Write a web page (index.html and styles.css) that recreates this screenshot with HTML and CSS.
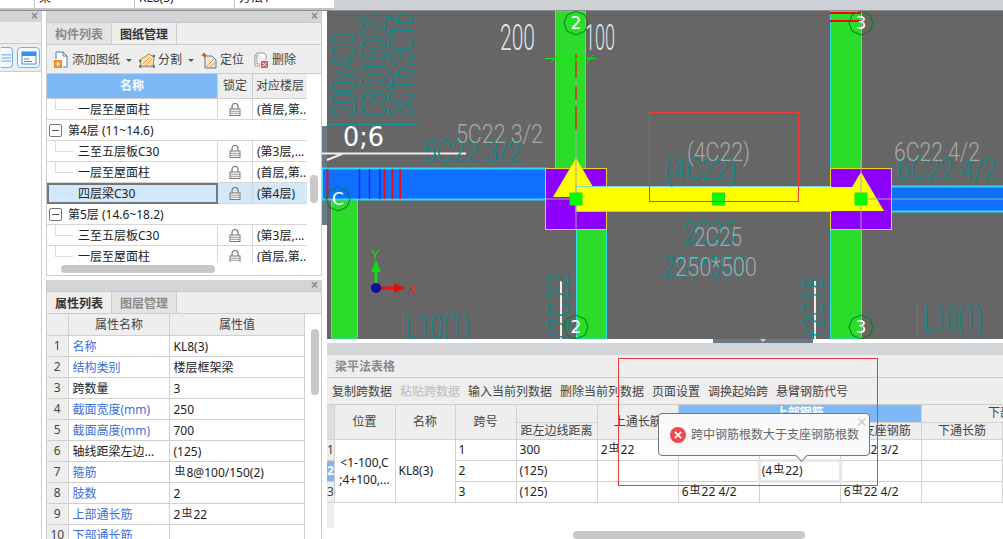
FILE: index.html
```html
<!DOCTYPE html>
<html lang="zh">
<head>
<meta charset="utf-8">
<title>梁平法表格</title>
<link rel="stylesheet" href="styles.css">
</head>
<body>
<svg class="defs" width="0" height="0" aria-hidden="true">
  <symbol id="lock" viewBox="0 0 12 13">
    <path d="M3 6V3.500a3 3 0 0 1 6 0V6" fill="none" stroke="#777" stroke-width="1.200"/>
    <rect x="1" y="6" width="10" height="6.500" fill="#fff" stroke="#777"/>
    <path d="M1 8.300h10M1 10.300h10" stroke="#999"/>
  </symbol>
</svg>
<div class="topstrip">
  <div class="topcells">
    <span class="topcell">梁</span><span class="topcell">KL8(3)</span><span class="topcell">方法1</span>
  </div>
</div>
<div class="main">
  <aside class="stub">
    <div class="titleband"><span class="closex">×</span></div>
    <div class="stubbar"></div>
    <div class="stubtools">
      <span class="iconbtn iconbtn-cut"><svg width="14" height="14" viewBox="0 0 14 14"><path d="M1 3h12M1 7h12M1 11h12" stroke="#3b8fe8"/></svg></span>
      <span class="iconbtn"><svg width="16" height="14" viewBox="0 0 16 14"><rect x="1" y="1" width="14" height="12" fill="#fff" stroke="#3b8fe8"/><rect x="1" y="1" width="14" height="4" fill="#3b8fe8"/><path d="M3 8h5M3 10.500h8" stroke="#3b8fe8"/></svg></span>
    </div>
  </aside>
  <div class="midcol">
    <section class="panel panel-drawings">
      <div class="titleband"><span class="closex">×</span></div>
      <div class="tabs">
        <span class="tab">构件列表</span><span class="tab tab-on">图纸管理</span>
      </div>
      <div class="tools">
        <span class="tool"><svg width="16" height="18" viewBox="0 0 16 18"><path d="M3 8V1h7l4 4v11h-4" fill="#fff" stroke="#3f7fb5"/><path d="M10 1v4h4" fill="none" stroke="#3f7fb5"/><rect x="1" y="9" width="8" height="8" fill="#f08a24"/><path d="M5 10.500v5M2.500 13h5" stroke="#fff"/></svg>添加图纸<i class="caret"></i></span>
        <span class="tool"><svg width="16" height="16" viewBox="0 0 16 16"><path d="M1 8l9-6 5 3-1 9H2z" fill="#fbe3a6" stroke="#c97a20"/><path d="M4 12l7-7M7 13l6-6" stroke="#e59a4a"/><path d="M0 8h2v2H0zM0 13.500h2v2H0zM14 13.500h2v2h-2zM14 3h2v2h-2zM2 15h12" fill="#3f7fb5" stroke="#3f7fb5" stroke-width=".5"/></svg>分割<i class="caret"></i></span>
        <span class="tool"><svg width="16" height="18" viewBox="0 0 16 18"><path d="M4 5h7l4 4v8H4z" fill="#fbe3c6" stroke="#3f7fb5"/><path d="M5 16l8-8M8 17l7-6" stroke="#e59a4a"/><path d="M3 1l1 2 2 1-2 1-1 2-1-2-2-1 2-1z" fill="#e5482d"/></svg>定位</span>
        <span class="tool tool-last"><svg width="16" height="17" viewBox="0 0 16 17"><path d="M2 3h1M2 3v11h5M4 1h7l2 2v5M4 1v11h3" fill="#fff" stroke="#999"/><rect x="8" y="9" width="7" height="7" fill="#e2555a"/><path d="M9.500 10.500l4 4m0-4l-4 4" stroke="#fff"/></svg>删除</span>
      </div>
      <div class="treehead">
        <span class="th-name">名称</span><span class="th-plain">锁定</span><span class="th-plain">对应楼层</span>
      </div>
      <div class="treebody">
        <div class="treerows">
          <div class="trow"><span class="tname">一层至屋面柱</span><span class="tlock"><svg width="12" height="13"><use href="#lock"/></svg></span><span class="tfloor">(首层,第..</span></div>
          <div class="tgroup"><i class="minus"></i>第4层 (11~14.6)</div>
          <div class="trow"><span class="tname">三至五层板C30</span><span class="tlock"><svg width="12" height="13"><use href="#lock"/></svg></span><span class="tfloor">(第3层,...</span></div>
          <div class="trow"><span class="tname">一层至屋面柱</span><span class="tlock"><svg width="12" height="13"><use href="#lock"/></svg></span><span class="tfloor">(首层,第..</span></div>
          <div class="trow trow-sel"><span class="tname">四层梁C30</span><span class="tlock"><svg width="12" height="13"><use href="#lock"/></svg></span><span class="tfloor">(第4层)</span></div>
          <div class="tgroup"><i class="minus"></i>第5层 (14.6~18.2)</div>
          <div class="trow"><span class="tname">三至五层板C30</span><span class="tlock"><svg width="12" height="13"><use href="#lock"/></svg></span><span class="tfloor">(第3层,...</span></div>
          <div class="trow"><span class="tname">一层至屋面柱</span><span class="tlock"><svg width="12" height="13"><use href="#lock"/></svg></span><span class="tfloor">(首层,第..</span></div>
        </div>
        <div class="vscroll vscroll-tree"></div>
      </div>
      <div class="hscroll-tree"></div>
    </section>
    <section class="panel panel-props">
      <div class="titleband"><span class="closex">×</span></div>
      <div class="tabs">
        <span class="tab tab-on tab-first">属性列表</span><span class="tab">图层管理</span>
      </div>
      <div class="propbody">
        <table class="props">
          <colgroup><col class="p-n"><col class="p-k"><col class="p-v"></colgroup>
          <tr><th></th><th>属性名称</th><th>属性值</th></tr>
          <tr><td class="num">1</td><td class="blue">名称</td><td>KL8(3)</td></tr>
          <tr><td class="num">2</td><td class="blue">结构类别</td><td>楼层框架梁</td></tr>
          <tr><td class="num">3</td><td>跨数量</td><td>3</td></tr>
          <tr><td class="num">4</td><td class="blue">截面宽度(mm)</td><td>250</td></tr>
          <tr><td class="num">5</td><td class="blue">截面高度(mm)</td><td>700</td></tr>
          <tr><td class="num">6</td><td>轴线距梁左边...</td><td>(125)</td></tr>
          <tr><td class="num">7</td><td class="blue">箍筋</td><td><span class="bar">虫</span>8@100/150(2)</td></tr>
          <tr><td class="num">8</td><td class="blue">肢数</td><td>2</td></tr>
          <tr><td class="num">9</td><td class="blue">上部通长筋</td><td>2<span class="bar">虫</span>22</td></tr>
          <tr><td class="num">10</td><td class="blue">下部通长筋</td><td></td></tr>
        </table>
        <div class="vscroll vscroll-props"></div>
      </div>
    </section>
  </div>
  <div class="rightcol">
    <svg class="cad" width="681" height="328" viewBox="322 11 681 328" role="img" aria-label="梁平法绘图区">
      <rect class="bg" x="327" y="11" width="676" height="328"/>
      <rect class="handle" x="322" y="126" width="5" height="99"/>

      <rect class="col" x="555.500" y="11" width="30" height="160"/>
      <rect class="col" x="576.500" y="225" width="30" height="114"/>
      <rect class="col" x="830.500" y="11" width="31" height="160"/>
      <rect class="col" x="830.500" y="225" width="31" height="114"/>
      <rect class="col" x="331.500" y="199" width="26" height="140"/>

      <path class="red2" d="M830 13h31M830 21h31"/>

      <rect class="beam" x="322" y="168.500" width="224" height="31"/>
      <rect class="beam" x="890" y="186.500" width="115" height="25"/>
      <path class="blueline" d="M359.500 169v30M369.500 169v30M380 169v30"/>
      <path class="redline" d="M327.500 169v30M384.500 169v30M392.500 169v30M400 169v30"/>

      <rect class="purple" x="545.500" y="168.500" width="61" height="61"/>
      <rect class="purple" x="830.500" y="168.500" width="61" height="61"/>
      <path class="yellow" d="M576 158l23 39h-46z"/>
      <path class="yellow" d="M861 172l23 39h-46z"/>
      <rect class="ybeam" x="576" y="186.500" width="255" height="25"/>
      <rect class="yellow" x="830" y="187" width="40" height="24"/>

      <path class="axisline" d="M576 54v114M576 168v62M546 199h30M861 160v70M861 199h142"/>
      <path class="dash" d="M576 54v24M576 86v14M576 106v24"/>
      <path class="tick" d="M545 58.500h51M551 63l6-8M574 63l6-8M587 63l6-8"/>

      <rect class="sq" x="570" y="193" width="12" height="12"/>
      <rect class="sq" x="712.500" y="193" width="12" height="12"/>
      <rect class="sq" x="855" y="193" width="12" height="12"/>
      <rect class="annot" x="649.500" y="112.500" width="149" height="89"/>

      <path class="teal1" d="M327 124.500h91"/>
      <path class="white2" d="M322 153.500h144M327 160l15-6"/>
      <path class="white2" d="M561 281v58M815 281v58"/>
      <path class="teal1" d="M917.500 300v39M403.500 313v26"/>

      <text class="t-teal" transform="translate(356 117) rotate(-90)" textLength="84" lengthAdjust="spacingAndGlyphs">200x400</text>
      <text class="t-teal" transform="translate(386 117) rotate(-90)" textLength="104" lengthAdjust="spacingAndGlyphs">C8@150(2)</text>
      <text class="t-teal" transform="translate(413 117) rotate(-90)" textLength="104" lengthAdjust="spacingAndGlyphs">3C16;3C16</text>
      <text class="t-teal t-m" x="423" y="162" textLength="99" lengthAdjust="spacingAndGlyphs">5C22 3/2</text>
      <text class="t-gray" x="456" y="143" textLength="87" lengthAdjust="spacingAndGlyphs">5C22 3/2</text>
      <text class="t-white" x="500" y="50" textLength="35" lengthAdjust="spacingAndGlyphs">200</text>
      <text class="t-white" x="585" y="50" textLength="30" lengthAdjust="spacingAndGlyphs">100</text>
      <text class="t-big" x="343" y="146" textLength="41" lengthAdjust="spacingAndGlyphs">0;6</text>
      <text class="t-teal t-m" x="665" y="180" textLength="72" lengthAdjust="spacingAndGlyphs">(4C22)</text>
      <text class="t-gray" x="687" y="161" textLength="63" lengthAdjust="spacingAndGlyphs">(4C22)</text>
      <text class="t-teal t-m" x="897" y="180" textLength="100" lengthAdjust="spacingAndGlyphs">6C22 4/2</text>
      <text class="t-gray" x="894" y="161" textLength="86" lengthAdjust="spacingAndGlyphs">6C22 4/2</text>
      <text class="t-teal t-m" x="684" y="243" textLength="52" lengthAdjust="spacingAndGlyphs">2C25</text>
      <text class="t-gray" x="694" y="246" textLength="48" lengthAdjust="spacingAndGlyphs">2C25</text>
      <text class="t-teal t-m" x="663" y="277" textLength="82" lengthAdjust="spacingAndGlyphs">250*500</text>
      <text class="t-gray" x="675" y="276" textLength="82" lengthAdjust="spacingAndGlyphs">250*500</text>
      <text class="t-teal t-m" transform="translate(569 341) rotate(-90)" textLength="67" lengthAdjust="spacingAndGlyphs">/2C22</text>
      <text class="t-teal t-m" transform="translate(824 341) rotate(-90)" textLength="64" lengthAdjust="spacingAndGlyphs">+2C18</text>
      <text class="t-teal" x="406" y="339" textLength="64" lengthAdjust="spacingAndGlyphs">L10(1)</text>
      <text class="t-teal" x="924" y="331" textLength="59" lengthAdjust="spacingAndGlyphs">L10(1)</text>

      <g class="axis">
        <path class="ax-g" d="M376 288v-26"/>
        <path class="ax-gf" d="M376 260l-5 12h10z"/>
        <path class="ax-r" d="M376 288h20"/>
        <path class="ax-rf" d="M405 288l-11-5v10z"/>
        <circle class="ax-o" cx="376" cy="288" r="5"/>
        <text class="ax-yt" x="371" y="259">Y</text>
        <text class="ax-xt" x="408" y="294">X</text>
      </g>

      <g class="marks">
        <polygon class="ring" points="576,11 585,15 588,23 585,31 576,35 567,31 564,23 567,15"/>
        <polygon class="ring" points="861,11 870,15 873,23 870,31 861,35 852,31 849,23 852,15"/>
        <polygon class="ring" points="338,187 347,191 350,199 347,207 338,211 329,207 326,199 329,191"/>
        <polygon class="ring" points="576,315 585,319 588,327 585,335 576,339 567,335 564,327 567,319"/>
        <polygon class="ring" points="861,315 870,319 873,327 870,335 861,339 852,335 849,327 852,319"/>
        <text class="t-mark" x="576" y="29">2</text>
        <text class="t-mark" x="861" y="29">3</text>
        <text class="t-mark" x="338" y="205">C</text>
        <text class="t-mark" x="576" y="333">2</text>
        <text class="t-mark" x="861" y="333">3</text>
      </g>
      <rect class="white-strip" x="322" y="11" width="5" height="115"/>
      <rect class="white-strip" x="322" y="225" width="5" height="114"/>
    </svg>
    <div class="hgap"><span class="pull"><i></i></span></div>
    <div class="titleband band-tall"></div>
    <div class="sheettitle">梁平法表格</div>
    <div class="sheettools">
      <span>复制跨数据</span><span class="off">粘贴跨数据</span><span>输入当前列数据</span><span>删除当前列数据</span><span>页面设置</span><span>调换起始跨</span><span>悬臂钢筋代号</span>
    </div>
    <div class="sheetwrap">
      <table class="sheet">
        <colgroup>
          <col class="c0"><col class="c1"><col class="c1b"><col class="c1"><col class="c3"><col class="c3"><col class="c3"><col class="c3"><col class="c3"><col class="c3"><col class="c3">
        </colgroup>
        <tr class="hd1">
          <th rowspan="2" class="gut"></th><th rowspan="2">位置</th><th rowspan="2">名称</th><th rowspan="2">跨号</th><th></th><th rowspan="2">上通长筋</th>
          <th colspan="3" class="grp">上部钢筋</th><th colspan="2" class="right-grp">下部钢筋</th>
        </tr>
        <tr class="hd2"><th>距左边线距离</th><th>左支座钢筋</th><th>跨中钢筋</th><th>右支座钢筋</th><th>下通长筋</th><th></th></tr>
        <tr><td class="gutn">1</td><td rowspan="3" class="wrap">&lt;1-100,C<br>;4+100,...</td><td rowspan="3">KL8(3)</td><td>1</td><td>300</td><td>2<span class="bar">虫</span>22</td><td></td><td></td><td>6<span class="bar">虫</span>22 3/2</td><td></td><td></td></tr>
        <tr><td class="gutn gut-on">2</td><td>2</td><td>(125)</td><td></td><td></td><td class="editing">(4<span class="bar">虫</span>22)</td><td></td><td></td><td></td></tr>
        <tr><td class="gutn">3</td><td>3</td><td>(125)</td><td></td><td>6<span class="bar">虫</span>22 4/2</td><td></td><td>6<span class="bar">虫</span>22 4/2</td><td></td><td></td></tr>
      </table>
      <div class="gutfill"></div>
      <div class="sheetscroll"></div>
    </div>
    <div class="redbox"></div>
    <div class="tip">
      <svg class="tip-icon" width="16" height="16" viewBox="0 0 16 16"><circle cx="8" cy="8" r="8" fill="#f0474f"/><path d="M4.800 4.800l6.400 6.400m0-6.400l-6.400 6.400" stroke="#fff" stroke-width="1.700"/></svg>
      <span class="tip-text">跨中钢筋根数大于支座钢筋根数</span>
      <span class="tip-close">×</span>
      <i class="tip-arrow"></i>
    </div>
  </div>
</div>
</body>
</html>
```
FILE: styles.css
```css
* { box-sizing: border-box; }
html, body { margin: 0; padding: 0; }
body {
  width: 1003px;
  height: 539px;
  overflow: hidden;
  background: #fff;
  color: #222;
  font: 12px/20px "Noto Sans", "Noto Sans CJK SC", sans-serif;
}
.defs { position: absolute; }

.topstrip { height: 11px; background: #cdd0d4; border-bottom: 1px solid #8b8b8b; }
.topcells { display: flex; width: 334px; height: 10px; padding-left: 34px; background: #fff; border-bottom: 2px solid #c4c4c4; overflow: hidden; }
.topcell { width: 100px; height: 8px; padding: 0 0 4px 4px; border-left: 1px solid #c4c4c4; display: flex; align-items: flex-end; line-height: 12px; }

.main { display: flex; height: 528px; }

.titleband { height: 11px; background: #d3d5d9; position: relative; }
.closex { position: absolute; right: 3px; top: -5px; font: bold 12px/20px "Liberation Sans", sans-serif; color: #888; }

.stub { width: 42px; flex: none; height: 528px; border-right: 1px solid #cfcfcf; }
.stubbar { height: 22px; background: #eee; border-bottom: 1px solid #ccc; }
.stubtools { height: 28px; background: #eee; border-bottom: 1px solid #ccc; display: flex; justify-content: flex-end; gap: 4px; align-items: center; padding-right: 1px; overflow: hidden; }
.iconbtn { width: 23px; height: 21px; border: 1px solid #74b0f0; border-radius: 4px; background: #f4f9ff; display: flex; align-items: center; justify-content: center; flex: none; }
.iconbtn-cut { width: 12px; justify-content: flex-end; border-left: 0; border-radius: 0 4px 4px 0; overflow: hidden; }

.midcol { width: 276px; flex: none; margin-left: 4px; margin-right: 5px; display: flex; flex-direction: column; gap: 4px; }
.panel { border: 1px solid #cdcdcd; border-top: 0; display: flex; flex-direction: column; overflow: hidden; }
.panel-drawings { height: 265px; }
.panel-props { flex: 1; border-bottom: 0; }

.tabs { height: 23px; display: flex; background: #eee; border-top: 1px solid #c8c8c8; border-bottom: 1px solid #cdcdcd; }
.tab { width: 65px; text-align: center; line-height: 23px; font-weight: 700; color: #8a8a8a; background: #e4e4e4; border-right: 1px solid #cdcdcd; font-size: 12px; }
.tab-on { color: #333; background: #eee; }

.tools { height: 29px; padding: 2px 0 0 6px; background: #eee; border-bottom: 1px solid #cdcdcd; display: flex; align-items: center; gap: 7px; color: #444; }
.tool { display: flex; align-items: center; gap: 3px; }
.tool svg { flex: none; }
.tool-last { margin-left: 2px; }
.caret { width: 0; height: 0; margin-left: 3px; border: 3px solid transparent; border-top: 3px solid #555; border-bottom: 0; }

.treehead { display: grid; grid-template-columns: 171px 35px 54px; height: 25px; line-height: 24px; text-align: center; background: #eee; width: 260px; }
.treehead span { border-bottom: 1px solid #cdcdcd; border-right: 1px solid #cdcdcd; color: #444; overflow: hidden; white-space: nowrap; }
.treehead .th-name { background: #7eb8f7; color: #fff; font-weight: 700; }
.treehead .th-plain:last-child { border-right: 0; }

.treebody { display: flex; height: 163px; }
.treerows { width: 260px; height: 163px; overflow: hidden; flex: none; }
.trow { display: grid; grid-template-columns: 171px 35px 54px; height: 21px; line-height: 22px; }
.trow span { border-bottom: 1px solid #d6d6d6; border-right: 1px solid #d6d6d6; height: 21px; white-space: nowrap; overflow: hidden; }
.trow .tfloor { border-right: 0; padding-left: 4px; }
.tlock { display: flex; align-items: center; justify-content: center; }
.tname { padding-left: 31px; position: relative; }
.tname::before { content: ""; position: absolute; left: 8px; top: 0; width: 17px; height: 10px; border-left: 1px solid #ddd; border-bottom: 1px solid #ddd; }
.trow-sel .tname { border: 2px solid #777; background: #d4e8fc; padding-left: 29px; line-height: 18px; }
.trow-sel .tname::before { left: 6px; top: -2px; }
.trow-sel .tlock, .trow-sel .tfloor { background: #d4e8fc; }
.tgroup { height: 21px; line-height: 22px; padding-left: 21px; position: relative; border-bottom: 1px solid #d6d6d6; }
.minus { position: absolute; left: 2px; top: 4px; width: 13px; height: 13px; border: 1px solid #777; border-radius: 2px; background: #fff; }
.minus::after { content: ""; position: absolute; left: 2px; top: 5px; width: 7px; height: 1px; background: #555; }

.vscroll { width: 8px; border-radius: 4px; background: #c8c8c8; flex: none; }
.vscroll-tree { height: 28px; margin: 76px 0 0 3px; }
.hscroll-tree { width: 154px; height: 8px; margin: 3px 0 0 14px; border-radius: 4px; background: #c8c8c8; }

.propbody { display: flex; flex: 1; overflow: hidden; }
.props { width: 257px; flex: none; border-collapse: collapse; table-layout: fixed; align-self: flex-start; }
.p-n { width: 21px; }
.p-k { width: 101px; }
.p-v { width: 135px; }
.props th, .props td { height: 21px; padding: 1px 3px 0 4px; border: 1px solid #d0d0d0; font-weight: 400; line-height: 19px; white-space: nowrap; overflow: hidden; }
.props tr:first-child th { border-top: 0; background: #eee; color: #444; text-align: center; }
.props th:first-child, .props td:first-child { border-left: 0; }
.props .num { background: #eee; text-align: center; padding: 0; color: #444; }
.blue { color: #3b6fe0; }
.bar { font-size: 11px; line-height: 1; position: relative; top: -2px; margin: 0 1px; font-family: "Noto Sans CJK SC", sans-serif; }
.vscroll-props { height: 66px; margin: 15px 0 0 6px; }

.rightcol { flex: 1; min-width: 0; margin-left: -5px; position: relative; display: flex; flex-direction: column; overflow: hidden; }
.cad { display: block; flex: none; }
.bg { fill: #666; }
.col { fill: #2bdc2b; stroke: #35dfe6; }
.red2 { stroke: #f00; stroke-width: 2; }
.beam { fill: #0f6fff; stroke: #35d6f2; stroke-width: 2; }
.blueline { stroke: #0a2cff; stroke-width: 1.500; fill: none; }
.redline { stroke: #f01010; stroke-width: 2; fill: none; }
.purple { fill: #8d00ff; stroke: #e6d72c; }
.yellow, .ybeam { fill: #ff0; }
.ybeam { stroke: #7fd8e0; }
.axisline { stroke: #a6a6a6; fill: none; }
.dash { stroke: #b8591c; stroke-width: 2; fill: none; }
.tick { stroke: #12e812; fill: none; }
.sq { fill: #0f0; stroke: #2bd82b; }
.annot { fill: none; stroke: #ee3b3b; }
.teal1 { stroke: #119a9a; fill: none; }
.white2 { stroke: #eee; stroke-width: 2; fill: none; }
.t-teal, .t-gray, .t-white { font-family: Roboto, "DejaVu Sans", sans-serif; font-weight: 300; }
.t-big, .t-mark { font-family: "DejaVu Sans", sans-serif; font-weight: 400; }
.t-teal { fill: #0a8a8a; font-size: 35px; }
.t-m { font-size: 32px; }
.t-gray { fill: #a6a6a6; font-size: 26px; }
.t-white { fill: #e4e4e4; font-size: 36px; }
.t-big { fill: #fff; font-size: 27px; }
.t-mark { fill: #fff; font-size: 17px; text-anchor: middle; }
.ring { fill: none; stroke: #0a7c1a; }
.ax-g { stroke: #12d812; stroke-width: 3; }
.ax-gf { fill: #12d812; }
.ax-r { stroke: #f01010; stroke-width: 3; }
.ax-rf { fill: #e01010; }
.ax-o { fill: #0a0f9c; }
.ax-yt { fill: #12d812; font: 13px "Liberation Sans", sans-serif; }
.ax-xt { fill: #f02020; font: 13px "Liberation Sans", sans-serif; }
.white-strip { fill: #fff; }
.handle { fill: #6b7885; }

.hgap { height: 4px; background: #fff; position: relative; margin-left: 5px; flex: none; }
.pull { display: block; width: 100px; height: 4px; margin-left: 386px; background: #6b7885; text-align: center; overflow: hidden; }
.pull i { display: block; width: 0; height: 0; margin: 0 auto; border: 3px solid transparent; border-top-color: #cfd3d8; border-bottom: 0; }
.titleband.band-tall { margin-left: 5px; height: 12px; flex: none; }
.sheettitle { margin-left: 5px; height: 22px; line-height: 23px; padding-left: 8px; background: #eee; color: #8a8a8a; font-weight: 700; flex: none; }
.sheettools { margin-left: 5px; height: 28px; padding: 2px 0 0 5px; background: #eee; border-top: 1px solid #cdcdcd; border-bottom: 1px solid #cdcdcd; display: flex; align-items: center; gap: 8px; color: #444; flex: none; white-space: nowrap; }
.sheettools .off { color: #bbb; }

.sheetwrap { margin-left: 5px; flex: 1; overflow: hidden; min-height: 0; }
.sheet { width: 757px; border-collapse: collapse; table-layout: fixed; }
.c0 { width: 7px; }
.c1 { width: 61px; }
.c1b { width: 60px; }
.c3 { width: 81px; }
.sheet th, .sheet td { border: 1px solid #d2d2d2; font-weight: 400; white-space: nowrap; overflow: hidden; padding: 0 3px; line-height: 18px; }
.sheet tr:first-child th { border-top: 0; }
.sheet th { background: #eee; text-align: center; color: #444; }
.hd1 th { height: 17px; line-height: 16px; }
.hd2 th { height: 17px; line-height: 16px; }
.sheet td { height: 21px; }
.sheet th.grp { background: #7eb8f7; color: #fff; font-weight: 700; }
.sheet th.right-grp { padding-left: 22px; }
.sheet th.gut, .sheet td.gutn { padding: 0; border-left: 0; background: #ddd; }
.sheet td.gutn { background: #eee; font-size: 12px; color: #444; }
.sheet td.gut-on { background: #7eb8f7; color: #fff; font-weight: 700; }
.sheet td.wrap { line-height: 17px; text-align: center; padding: 0 1px; }
.sheet td.editing { border: 3px solid #e8e8e8; padding: 0 1px; }
.gutfill { width: 7px; height: 25px; background: #eee; }
.sheetscroll { width: 232px; height: 8px; margin: 3px 0 0 246px; border-radius: 4px; background: #c8c8c8; }

.redbox { position: absolute; left: 296px; top: 347px; width: 260px; height: 128px; border: 1px solid #ee3b3b; pointer-events: none; }
.tip { position: absolute; left: 336px; top: 402px; width: 212px; height: 43px; background: #fafafa; border: 1px solid #777; border-radius: 4px; display: flex; align-items: center; gap: 5px; padding-left: 11px; color: #666; }
.tip-icon { flex: none; }
.tip-text { white-space: nowrap; }
.tip-close { position: absolute; right: 2px; top: -1px; font: 18px/18px "Liberation Sans", sans-serif; color: #ccc; }
.tip-arrow { position: absolute; left: 138px; bottom: -5px; width: 9px; height: 9px; background: #fafafa; border-right: 1px solid #777; border-bottom: 1px solid #777; transform: rotate(45deg); }
```
